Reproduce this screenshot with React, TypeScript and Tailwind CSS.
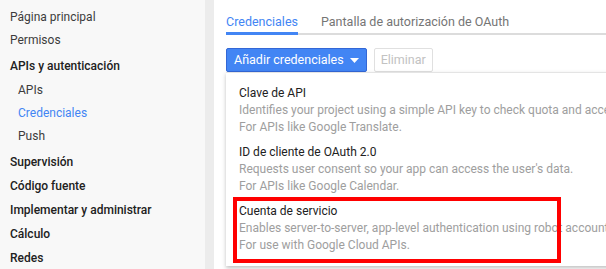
const navItems: { label: string; kind: 'top' | 'group' | 'sub' | 'active'; gap?: boolean }[] = [
  { label: 'Página principal', kind: 'top' },
  { label: 'Permisos', kind: 'top' },
  { label: 'APIs y autenticación', kind: 'group', gap: true },
  { label: 'APIs', kind: 'sub' },
  { label: 'Credenciales', kind: 'active' },
  { label: 'Push', kind: 'sub' },
  { label: 'Supervisión', kind: 'group', gap: true },
  { label: 'Código fuente', kind: 'group' },
  { label: 'Implementar y administrar', kind: 'group' },
  { label: 'Cálculo', kind: 'group' },
  { label: 'Redes', kind: 'group' },
];

const options = [
  {
    title: 'Clave de API',
    lines: [
      'Identifies your project using a simple API key to check quota and access.',
      'For APIs like Google Translate.',
    ],
  },
  {
    title: 'ID de cliente de OAuth 2.0',
    lines: ["Requests user consent so your app can access the user's data.", 'For APIs like Google Calendar.'],
  },
  {
    title: 'Cuenta de servicio',
    lines: [
      'Enables server-to-server, app-level authentication using robot accounts.',
      'For use with Google Cloud APIs.',
    ],
  },
];

const Sidebar = () => (
  <div className="w-[205px] shrink-0 bg-[#f8f8f8] pt-[7px]">
    {navItems.map((item) => {
      const cls = {
        top: 'h-[23px] pl-[10px] text-[#3c3c3c]',
        group: 'h-[24px] pl-[10px] font-medium text-[#212121]',
        sub: 'h-[23px] pl-[18px] text-[#3c3c3c]',
        active: 'h-[23px] pl-[18px] text-[#4285f4]',
      }[item.kind];
      return (
        <div key={item.label} className={`leading-[20px] text-[12px] ${item.gap ? 'mt-[3px]' : ''} ${cls}`}>
          {item.label}
        </div>
      );
    })}
  </div>
);

export default function App() {
  return (
    <div className="flex h-[269px] w-[606px] overflow-hidden bg-white font-['Roboto',sans-serif]">
      <Sidebar />
      <div className="w-[9px] shrink-0 bg-[#ececec]" />

      <div className="relative flex-1 bg-white">
        {/* Tabs */}
        <div className="ml-[12px] flex gap-[23px] border-b-2 border-[#dcdcdc] text-[12.5px]">
          <div className="-mb-[2px] border-b-[3px] border-[#4285f4] pt-[12px] leading-[20px] text-[#4285f4]">
            Credenciales
          </div>
          <div className="pt-[12px] leading-[20px] text-[#757575]">Pantalla de autorización de OAuth</div>
        </div>

        {/* Actions */}
        <div className="ml-[12px] mt-[13px] flex gap-[7px] text-[12.5px]">
          <button className="flex h-[24px] items-center gap-[6px] rounded-[2px] border border-[#3367d6] bg-[#4285f4] pl-[7px] pr-[7px] text-white">
            Añadir credenciales
            <svg width="9" height="5" viewBox="0 0 9 5">
              <path d="M0 0h9L4.5 5z" fill="#fff" />
            </svg>
          </button>
          <button className="h-[24px] rounded-[2px] border border-[#e0e0e0] px-[6px] text-[#c2c2c2]">Eliminar</button>
        </div>

        {/* Dropdown menu */}
        <div className="absolute left-[12px] top-[72px] w-[420px] border-t border-[#e4e4e4] bg-white pl-[13px] pt-[12px] pb-[12px] shadow-[0_2px_4px_rgba(0,0,0,0.25)]">
          <div className="flex flex-col gap-[8px] whitespace-nowrap text-[12px] leading-[17px]">
            {options.map((o) => (
              <div key={o.title}>
                <div className="text-[#212121]">{o.title}</div>
                {o.lines.map((l) => (
                  <div key={l} className="text-[#9e9e9e]">
                    {l}
                  </div>
                ))}
              </div>
            ))}
          </div>
          {/* highlight annotation */}
          <div className="absolute left-[7px] top-[124px] h-[66px] w-[328px] border-4 border-[#ff0000]" />
        </div>
      </div>
    </div>
  );
}
